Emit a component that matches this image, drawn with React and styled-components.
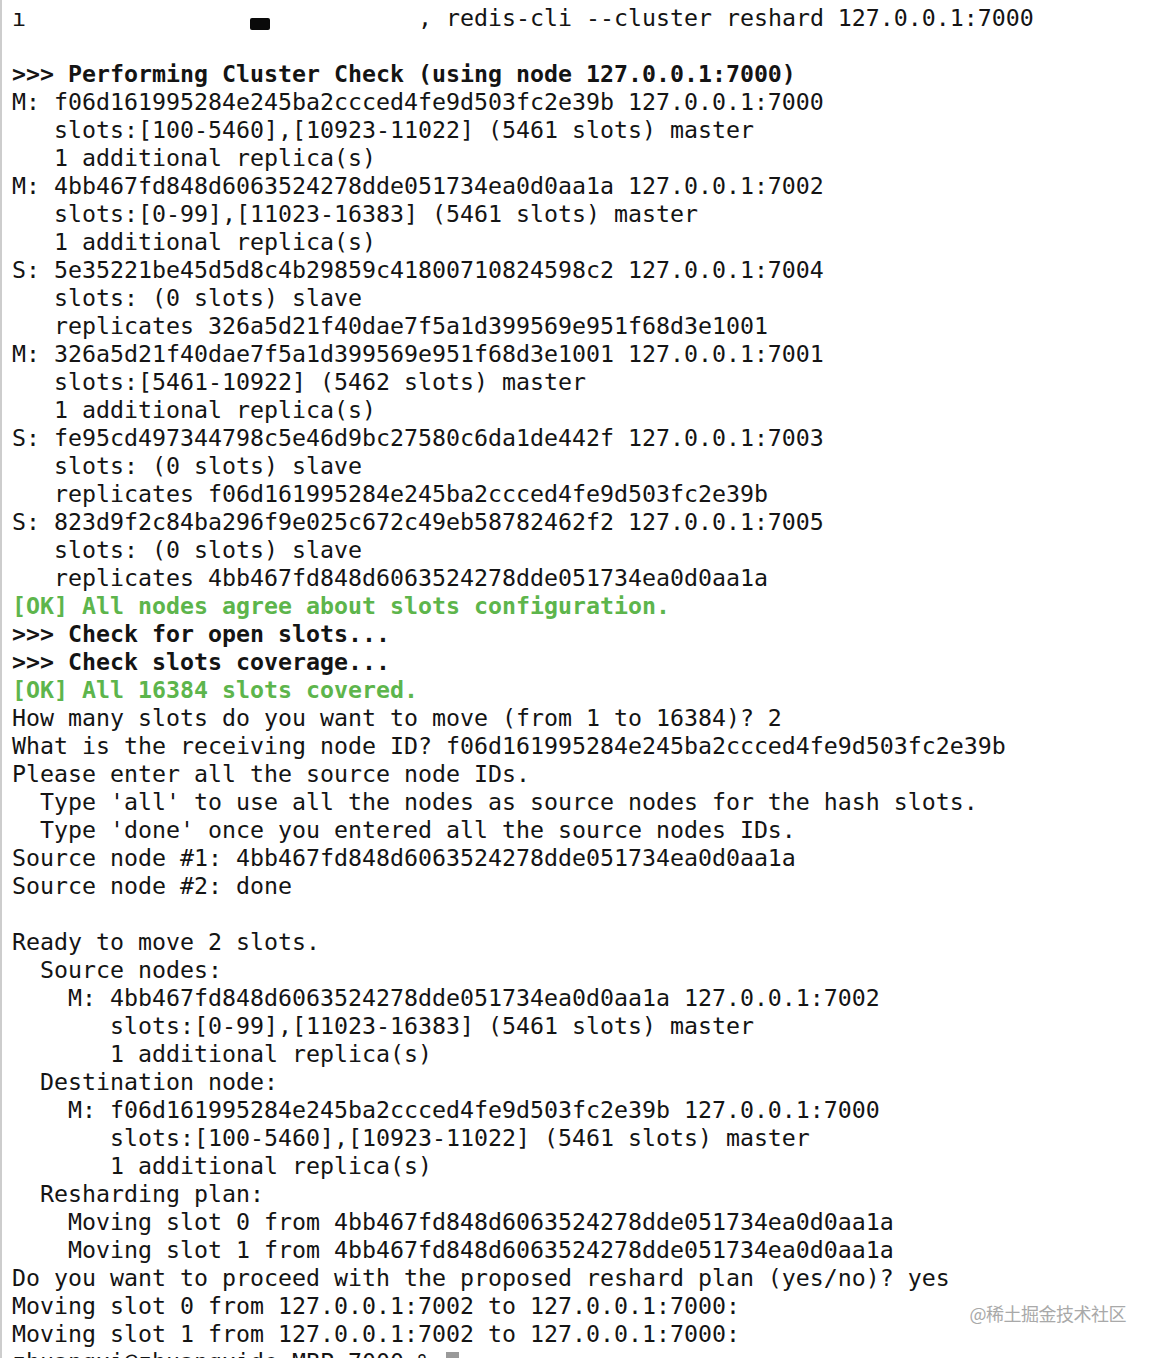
import styled, { createGlobalStyle } from 'styled-components'

const GlobalStyle = createGlobalStyle`
    html, body {
        background: #ffffff;
        margin: 0;
        overflow: hidden;
        padding: 0;
    }
`

const Window = styled.div`
    background: #ffffff;
    border-left: 2px solid #cdcdcd;
    box-sizing: border-box;
    height: 1358px;
    overflow: hidden;
    position: relative;
    width: 1158px;
`

const Terminal = styled.div`
    color: #141414;
    display: flex;
    flex-direction: column;
    font-family: "DejaVu Sans Mono", "Liberation Mono", monospace;
    font-size: 23.25px;
    line-height: 28px;
    padding: 4px 0 0 10px;
`

const Line = styled.div`
    color: ${({ $tone }) => ($tone === 'ok' ? '#5db54c' : '#141414')};
    font-weight: ${({ $tone }) => ($tone ? 700 : 400)};
    height: 28px;
    white-space: pre;
`

const Redacted = styled.span`
    background: #0a0a0a;
    border-radius: 2px;
    display: inline-block;
    height: 12px;
    margin-right: -6px;
    vertical-align: -4px;
    width: 20px;
`

const Cursor = styled.span`
    background: #9a9a9a;
    display: inline-block;
    height: 24px;
    vertical-align: -6px;
    width: 13px;
`

const Watermark = styled.div`
    color: #a9a9a9;
    font-family: "Noto Sans CJK SC", "Noto Sans", sans-serif;
    font-size: 18px;
    letter-spacing: -0.5px;
    position: absolute;
    right: 32px;
    text-shadow: 0 0 2px #ffffff;
    top: 1300px;
`

const lines = [
    ['', ''],
    ['bold', '>>> Performing Cluster Check (using node 127.0.0.1:7000)'],
    ['', 'M: f06d161995284e245ba2ccced4fe9d503fc2e39b 127.0.0.1:7000'],
    ['', '   slots:[100-5460],[10923-11022] (5461 slots) master'],
    ['', '   1 additional replica(s)'],
    ['', 'M: 4bb467fd848d6063524278dde051734ea0d0aa1a 127.0.0.1:7002'],
    ['', '   slots:[0-99],[11023-16383] (5461 slots) master'],
    ['', '   1 additional replica(s)'],
    ['', 'S: 5e35221be45d5d8c4b29859c41800710824598c2 127.0.0.1:7004'],
    ['', '   slots: (0 slots) slave'],
    ['', '   replicates 326a5d21f40dae7f5a1d399569e951f68d3e1001'],
    ['', 'M: 326a5d21f40dae7f5a1d399569e951f68d3e1001 127.0.0.1:7001'],
    ['', '   slots:[5461-10922] (5462 slots) master'],
    ['', '   1 additional replica(s)'],
    ['', 'S: fe95cd497344798c5e46d9bc27580c6da1de442f 127.0.0.1:7003'],
    ['', '   slots: (0 slots) slave'],
    ['', '   replicates f06d161995284e245ba2ccced4fe9d503fc2e39b'],
    ['', 'S: 823d9f2c84ba296f9e025c672c49eb58782462f2 127.0.0.1:7005'],
    ['', '   slots: (0 slots) slave'],
    ['', '   replicates 4bb467fd848d6063524278dde051734ea0d0aa1a'],
    ['ok', '[OK] All nodes agree about slots configuration.'],
    ['bold', '>>> Check for open slots...'],
    ['bold', '>>> Check slots coverage...'],
    ['ok', '[OK] All 16384 slots covered.'],
    ['', 'How many slots do you want to move (from 1 to 16384)? 2'],
    ['', 'What is the receiving node ID? f06d161995284e245ba2ccced4fe9d503fc2e39b'],
    ['', 'Please enter all the source node IDs.'],
    ['', "  Type 'all' to use all the nodes as source nodes for the hash slots."],
    ['', "  Type 'done' once you entered all the source nodes IDs."],
    ['', 'Source node #1: 4bb467fd848d6063524278dde051734ea0d0aa1a'],
    ['', 'Source node #2: done'],
    ['', ''],
    ['', 'Ready to move 2 slots.'],
    ['', '  Source nodes:'],
    ['', '    M: 4bb467fd848d6063524278dde051734ea0d0aa1a 127.0.0.1:7002'],
    ['', '       slots:[0-99],[11023-16383] (5461 slots) master'],
    ['', '       1 additional replica(s)'],
    ['', '  Destination node:'],
    ['', '    M: f06d161995284e245ba2ccced4fe9d503fc2e39b 127.0.0.1:7000'],
    ['', '       slots:[100-5460],[10923-11022] (5461 slots) master'],
    ['', '       1 additional replica(s)'],
    ['', '  Resharding plan:'],
    ['', '    Moving slot 0 from 4bb467fd848d6063524278dde051734ea0d0aa1a'],
    ['', '    Moving slot 1 from 4bb467fd848d6063524278dde051734ea0d0aa1a'],
    ['', 'Do you want to proceed with the proposed reshard plan (yes/no)? yes'],
    ['', 'Moving slot 0 from 127.0.0.1:7002 to 127.0.0.1:7000:'],
    ['', 'Moving slot 1 from 127.0.0.1:7002 to 127.0.0.1:7000:'],
]

export default function App() {
    return (
        <>
            <GlobalStyle />
            <Window>
                <Terminal>
                    <Line>
                        {'ı                '}
                        <Redacted />
                        {'           , redis-cli --cluster reshard 127.0.0.1:7000'}
                    </Line>
                    {lines.map(([tone, text], i) => (
                        <Line key={i} $tone={tone}>{text}</Line>
                    ))}
                    <Line>
                        {'zhuangxi@zhuangxide-MBP 7000 % '}
                        <Cursor />
                    </Line>
                </Terminal>
                <Watermark>@稀土掘金技术社区</Watermark>
            </Window>
        </>
    )
}
